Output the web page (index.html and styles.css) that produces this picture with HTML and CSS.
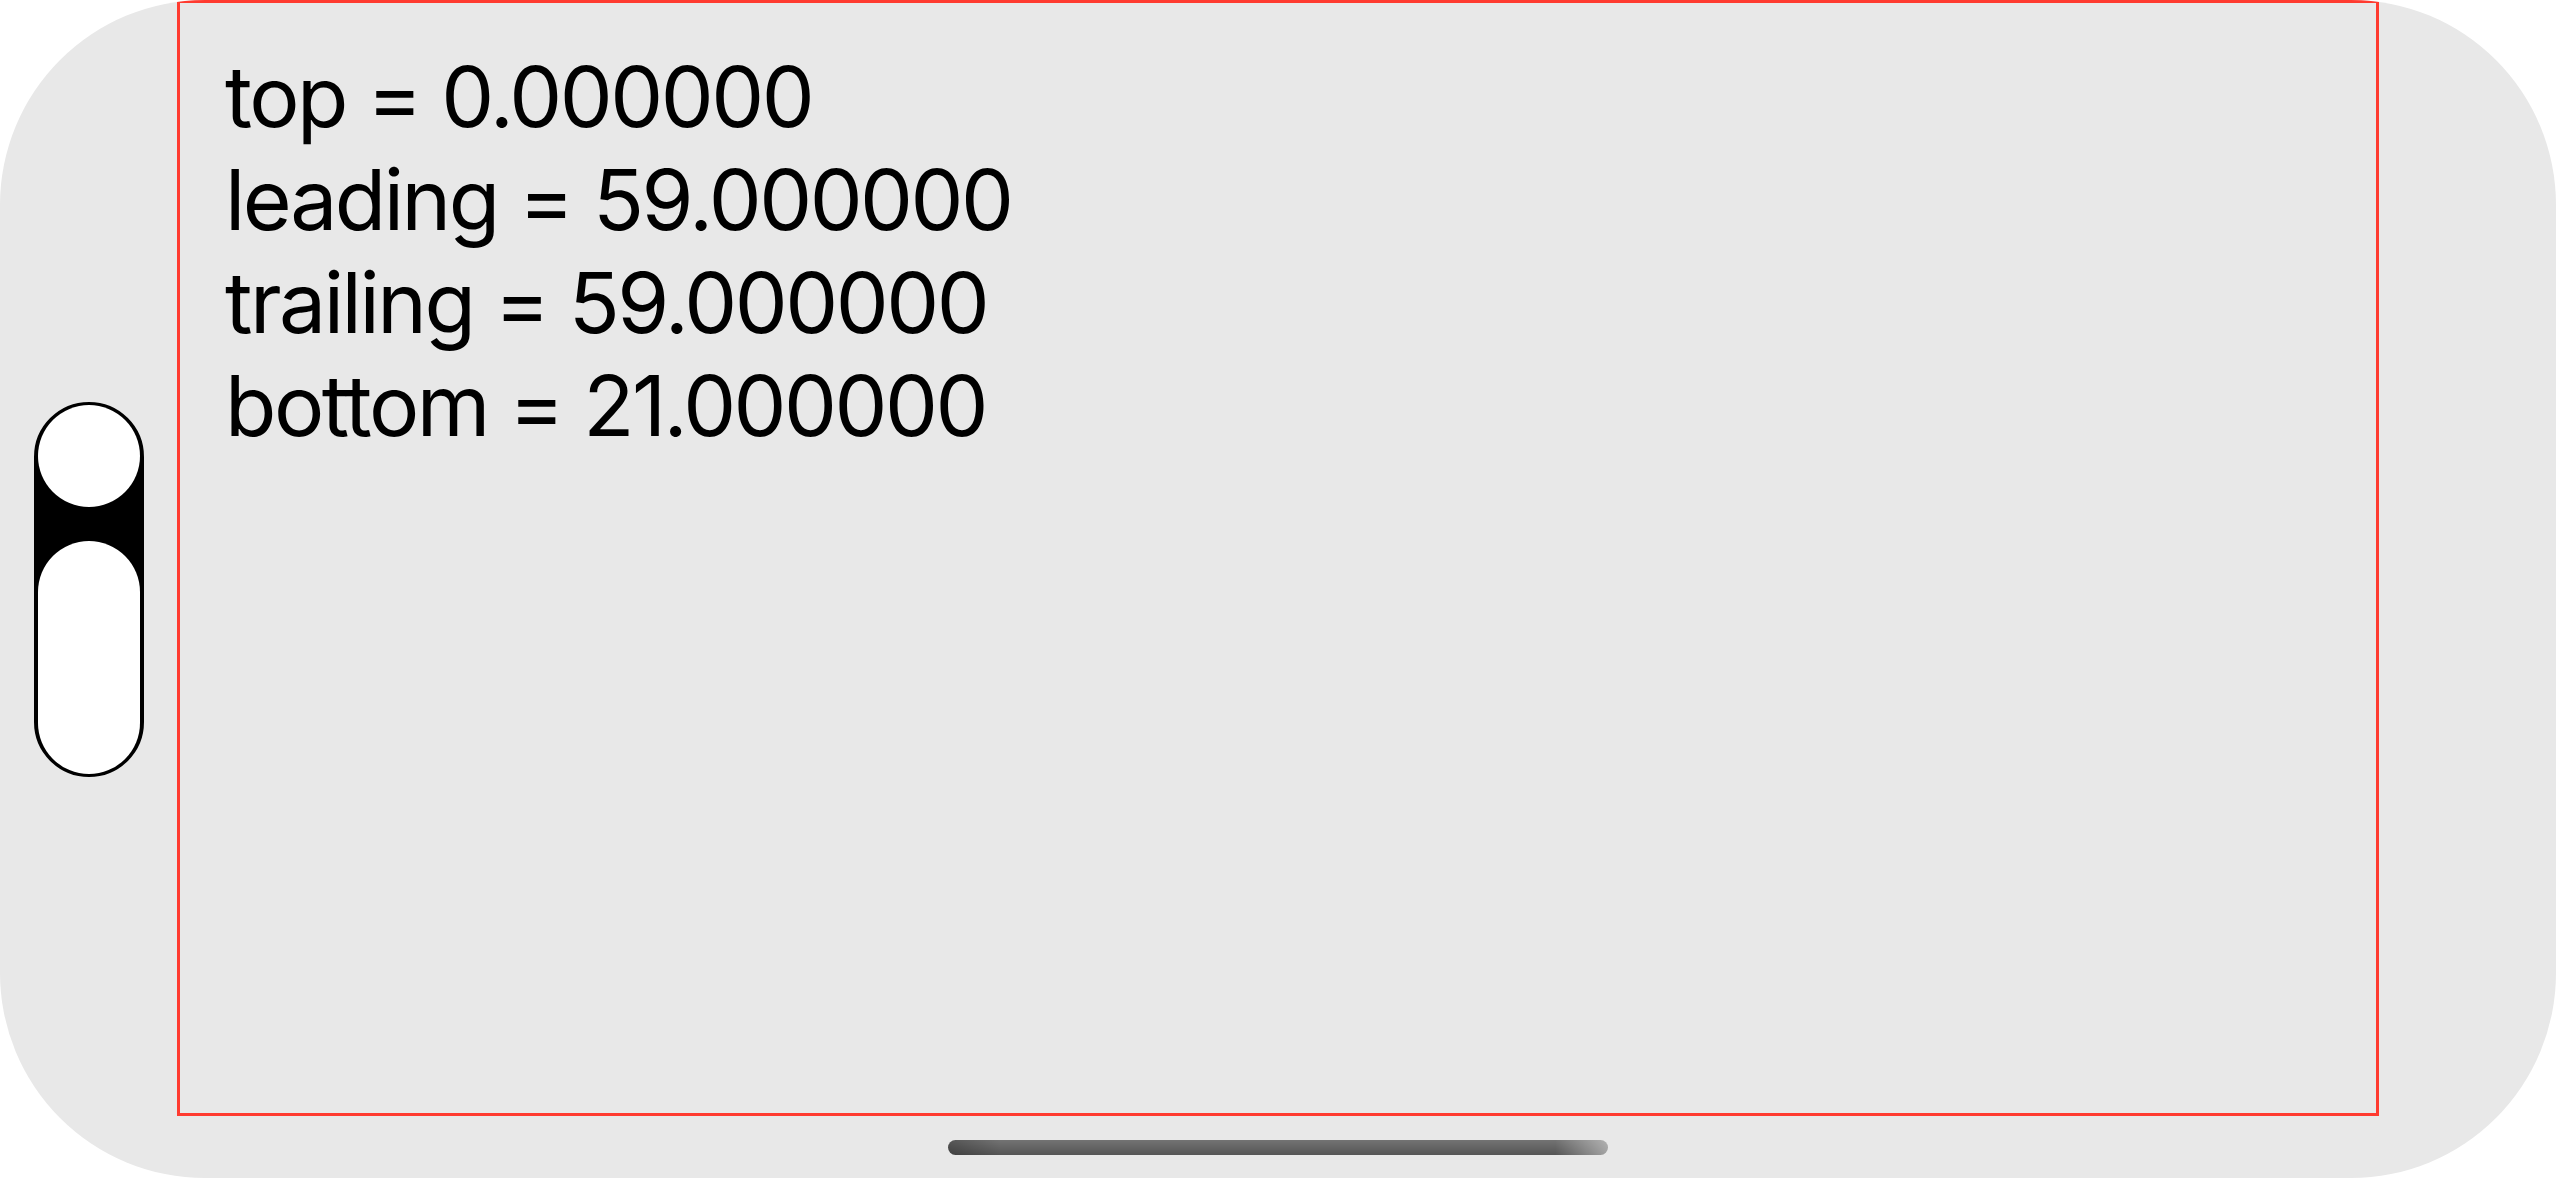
FILE: index.html
```html
<!DOCTYPE html>
<html>
<head>
<meta charset="utf-8">
<link rel="stylesheet" href="styles.css">
</head>
<body>
<div class="device">
  <div class="side">
    <div class="notch">
      <div class="cam"></div>
      <div class="sensor"></div>
    </div>
  </div>
  <div class="main">
    <div class="safe">
      <div class="line">top = 0.000000</div>
      <div class="line">leading = 59.000000</div>
      <div class="line">trailing = 59.000000</div>
      <div class="line">bottom = 21.000000</div>
    </div>
    <div class="home-area"><div class="home"></div></div>
  </div>
  <div class="side"></div>
</div>
</body>
</html>
```
FILE: styles.css
```css
html, body {
  margin: 0;
  padding: 0;
  background: #ffffff;
}
.device {
  width: 2556px;
  height: 1178px;
  background: #e8e8e8;
  border-radius: 205px;
  display: grid;
  grid-template-columns: 177px 1fr 177px;
  overflow: hidden;
}
.side {
  display: flex;
  align-items: center;
  justify-content: center;
}
.notch {
  box-sizing: border-box;
  width: 110px;
  height: 375px;
  background: #000;
  border: 3px solid #000;
  border-radius: 55px;
  display: flex;
  flex-direction: column;
  align-items: center;
  gap: 34px;
}
.cam {
  width: 102px;
  height: 102px;
  border-radius: 50%;
  background: #fff;
}
.sensor {
  width: 102px;
  flex: 1;
  border-radius: 51px;
  background: #fff;
}
.main {
  display: flex;
  flex-direction: column;
}
.safe {
  box-sizing: border-box;
  height: 1116px;
  border: 3px solid #ff3b30;
  padding: 42px 0 0 45px;
  font-family: "Inter", "Roboto", sans-serif;
  font-size: 84px;
  line-height: 103px;
  letter-spacing: -2.5px;
  color: #000;
}
.home-area {
  flex: 1;
  display: flex;
  align-items: center;
  justify-content: center;
}
.home {
  width: 660px;
  height: 15px;
  border-radius: 8px;
  background:
    linear-gradient(to right, rgba(0,0,0,0.25), rgba(0,0,0,0) 8%, rgba(255,255,255,0) 92%, rgba(255,255,255,0.45)),
    linear-gradient(to bottom, #737373, #555555);
}
```
